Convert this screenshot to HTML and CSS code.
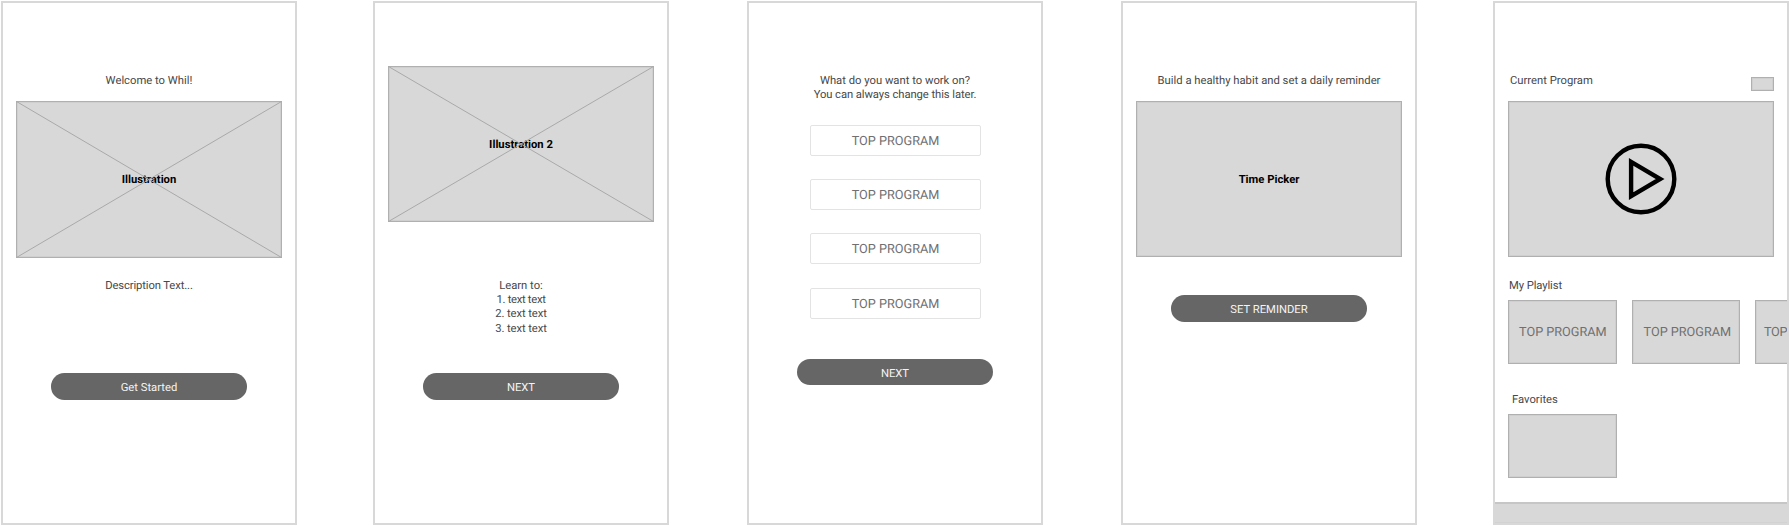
FILE: index.html
```html
<!DOCTYPE html>
<html lang="en">
<head>
<meta charset="utf-8">
<title>Onboarding wireframes</title>
<link rel="stylesheet" href="styles.css">
</head>
<body>
<main class="board">
  <section class="screen screen-welcome">
    <p class="copy heading"><span class="t-welcome">Welcome to Whil!</span></p>
    <div class="box hero">
      <strong>Illustration</strong>
      <svg class="cross" viewBox="0 0 266 157"><path d="M.5 .5L265.5 156.5M265.5 .5L.5 156.5"/></svg>
    </div>
    <p class="copy description"><span class="t-desc">Description Text...</span></p>
    <div class="button after-description">Get Started</div>
  </section>

  <section class="screen screen-learn">
    <div class="box hero">
      <strong class="t-ill2">Illustration 2</strong>
      <svg class="cross" viewBox="0 0 266 156"><path d="M.5 .5L265.5 155.5M265.5 .5L.5 155.5"/></svg>
    </div>
    <div class="copy learn">
      <p>Learn to:</p>
      <p class="t-list t-first">1. text text</p>
      <p class="t-list">2. text text</p>
      <p class="t-list">3. text text</p>
    </div>
    <div class="button after-learn t-next">NEXT</div>
  </section>

  <section class="screen screen-choose">
    <div class="copy heading question">
      <p>What do you want to work on?</p>
      <p class="t-you">You can always change this later.</p>
    </div>
    <div class="options">
      <div class="option">TOP PROGRAM</div>
      <div class="option">TOP PROGRAM</div>
      <div class="option">TOP PROGRAM</div>
      <div class="option">TOP PROGRAM</div>
    </div>
    <div class="button after-options t-next">NEXT</div>
  </section>

  <section class="screen screen-reminder">
    <p class="copy heading"><span>Build a healthy habit and set a daily reminder</span></p>
    <div class="box hero"><strong>Time Picker</strong></div>
    <div class="button after-picker">SET REMINDER</div>
  </section>

  <section class="screen screen-home">
    <header class="home-head">
      <p class="copy">Current Program</p>
      <div class="box chip"></div>
    </header>
    <div class="box hero">
      <svg class="play" viewBox="0 0 72 72">
        <circle cx="36" cy="36" r="33.3"/>
        <path d="M26.1 18.8L55.2 36L26.1 53.2Z"/>
      </svg>
    </div>
    <p class="copy label-playlist">My Playlist</p>
    <div class="cards">
      <div class="box card">TOP PROGRAM</div>
      <div class="box card card-second">TOP PROGRAM</div>
      <div class="box card card-third">TOP</div>
    </div>
    <p class="copy label-favorites">Favorites</p>
    <div class="box card"></div>
    <footer class="tabbar"></footer>
  </section>
</main>
</body>
</html>
```
FILE: styles.css
```css
* { box-sizing: border-box; }
body { margin: 0; background: #fff; font-family: Roboto, "Liberation Sans", sans-serif; font-size: 11.25px; line-height: 14.2px; color: #484848; overflow: hidden; text-rendering: geometricPrecision; }
p { margin: 0; }

.board { display: flex; width: 1790px; height: 526px; padding: 1px; }
.screen { display: flex; flex-direction: column; align-items: center; flex: none; width: 296px; height: 524px; border: 2px solid #d8d8d8; overflow: hidden; white-space: nowrap; }
.screen-learn { margin-left: 76px; padding-top: 63px; }
.screen-choose, .screen-reminder { margin-left: 78px; }
.screen-home { margin-left: 76px; align-items: flex-start; padding-left: 13px; }

.copy { text-align: center; }
.heading { flex: none; height: 27px; margin-top: 71px; }

.box { flex: none; background: #d8d8d8; border: 1px solid #b0b0b0; box-shadow: inset 0 0 0 1px #cfcfcf; }
.hero { position: relative; display: flex; align-items: center; justify-content: center; width: 266px; height: 156px; color: #000; }
.hero strong { padding-top: 2px; }
.screen-welcome .hero { height: 157px; }
.cross { position: absolute; left: -1px; top: -1px; width: 266px; height: 156px; fill: none; stroke: #a9a9a9; stroke-width: 1; }
.screen-welcome .cross { height: 157px; }

.description { margin-top: 21px; }
.learn { margin-top: 57px; }
.button { flex: none; width: 196.6px; height: 26.6px; border-radius: 13.3px; background: #666; color: #f4f4f4; text-align: center; line-height: 29.4px; }
.after-description { margin-top: 80px; }
.after-learn { margin-top: 37.4px; }
.after-picker { margin-top: 38.2px; }
.after-options { margin-top: 40px; }

.question { height: 51px; }
.options { display: flex; flex-direction: column; gap: 23.2px; width: 171px; margin-left: 1px; }
.option { height: 31px; border: 1px solid #e3e3e3; border-radius: 2px; color: #707070; font-size: 12.7px; line-height: 32px; text-align: center; }

.home-head { display: flex; flex: none; justify-content: space-between; width: 266px; height: 27px; margin-top: 71px; padding-left: 2px; }
.chip { width: 23px; height: 14px; margin-top: 3px; }
.play { width: 72px; height: 72px; fill: none; stroke: #000; stroke-width: 4.4; }
.label-playlist { margin: 22px 0 0 1px; letter-spacing: -.1px; }
.cards { display: flex; gap: 15px; margin-top: 6.8px; }
.card { width: 108.5px; height: 64px; padding-left: 10px; color: #707070; font-size: 12.7px; line-height: 63px; }
.card-second { padding-left: 11px; }
.card-third { padding-left: 8px; letter-spacing: -.3px; }
.label-favorites { margin: 29px 0 6.8px 4px; }
.tabbar { align-self: stretch; flex: none; height: 21px; margin: 24px 0 0 -13px; background: #d8d8d8; border-top: 2px solid #c6c6c6; border-bottom: 1px solid #d2d2d2; }

.t-desc { letter-spacing: -.12px; }
.t-list { letter-spacing: -.1px; }
.t-first { letter-spacing: -.3px; }
.t-next { letter-spacing: -.05px; }
.t-you { letter-spacing: -.08px; }
```
